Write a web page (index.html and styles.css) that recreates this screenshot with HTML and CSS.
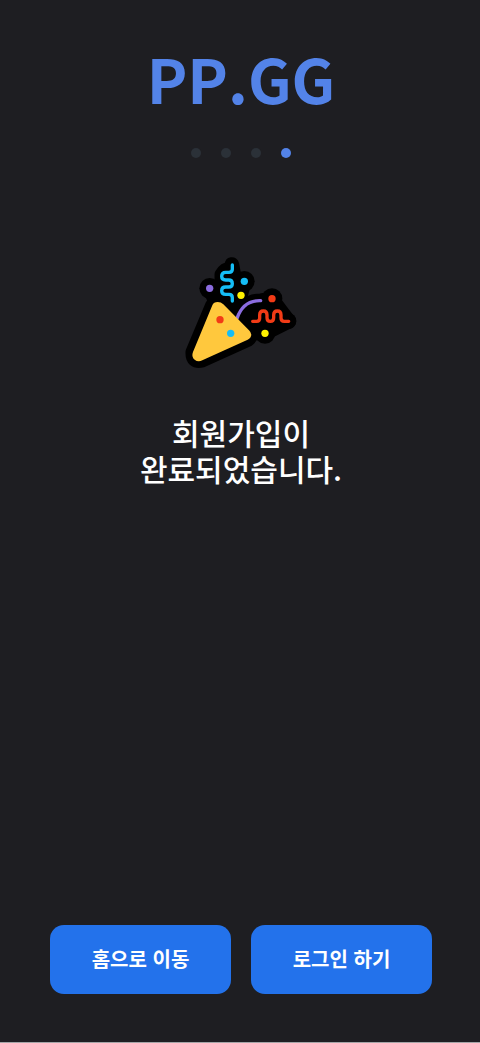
FILE: index.html
```html
<!DOCTYPE html>
<html lang="ko">
<head>
<meta charset="utf-8">
<meta name="viewport" content="width=device-width, initial-scale=1">
<title>PP.GG</title>
<link rel="stylesheet" href="styles.css">
</head>
<body>
<div class="page">
  <header class="header">
    <div class="logo">PP.GG</div>
    <ol class="steps" aria-label="4/4">
      <li class="step"></li>
      <li class="step"></li>
      <li class="step"></li>
      <li class="step step-active" aria-current="step"></li>
    </ol>
  </header>
  <main class="content">
    <svg class="party" viewBox="18 15 360 345" aria-hidden="true">
      <g fill="#000" stroke="#000" stroke-width="43" stroke-linecap="round" stroke-linejoin="round">
        <path d="M112 166Q127 145 145 164L222 241Q236 257 218 269L82 331Q51 339 53 306Z"/>
        <path d="M171 43V58Q150 55 140 74V122Q140 133 154 133L172 153L197 136L208 94L180 90Z"/>
        <path d="M104 115L140 122L125 165Z"/>
        <path d="M185 206Q207 151 258 152L291 146L316 180L342 214L270 250L218 248Z"/>
      </g>
      <g fill="#000">
        <circle cx="104" cy="115" r="31"/>
        <circle cx="208" cy="94" r="31"/>
        <circle cx="291" cy="146" r="31"/>
        <circle cx="340" cy="213" r="24"/>
        <circle cx="270" cy="250" r="31"/>
      </g>
      <g fill="none" stroke-width="10" stroke-linecap="round" stroke-linejoin="round">
        <path stroke="#8b6cdf" d="M186 205Q205 150 257 152"/>
        <path stroke="#15bdf6" d="M172 45V58Q172 67 162 67H152Q140 67 140 79Q140 90 152 90H161Q172 90 172 101Q172 111 161 111H152Q140 111 140 122Q140 133 152 133H162Q172 133 172 143V153"/>
        <path stroke="#f23b16" d="M233 214H245Q254 214 254 205V195Q254 183 265 183Q276 183 276 195V203Q276 214 286 214Q296 214 296 203V195Q296 183 307 183Q318 183 318 195V204Q318 214 328 214H341"/>
      </g>
      <path fill="#ffc83d" d="M112 166Q116 156 128 156Q138 156 145 163L222 241Q229 248 229 254Q228 264 218 269L82 331Q69 337 59 329Q48 321 54 306Z"/>
      <g fill="#8b6cdf"><circle cx="104" cy="115" r="11"/></g>
      <g fill="#15bdf6"><circle cx="208" cy="94" r="11"/><circle cx="167" cy="250" r="11"/></g>
      <g fill="#fff100"><circle cx="198" cy="136" r="11"/><circle cx="270" cy="250" r="11"/></g>
      <g fill="#f23b16"><circle cx="135" cy="209" r="11"/><circle cx="291" cy="146" r="11"/></g>
    </svg>
    <h1 class="message">회원가입이<br>완료되었습니다.</h1>
  </main>
  <footer class="actions">
    <button class="button" type="button">홈으로 이동</button>
    <button class="button" type="button">로그인 하기</button>
  </footer>
</div>
</body>
</html>
```
FILE: styles.css
```css
* {
  box-sizing: border-box;
}

body {
  margin: 0;
  background: #1e1e22;
  color: #fff;
  font-family: "Noto Sans CJK KR", "Noto Sans", sans-serif;
}

.page {
  display: flex;
  flex-direction: column;
  min-height: 100vh;
  padding: 42px 48px 48px 50px;
  border-bottom: 1px solid #a5a5a8;
}

.header,
.content {
  display: flex;
  flex-direction: column;
  align-items: center;
}

.logo {
  color: #5383e8;
  font-size: 61px;
  font-weight: 700;
  line-height: 72px;
}

.steps {
  display: flex;
  gap: 20px;
  margin: 34px 0 0;
  padding: 0;
  list-style: none;
}

.step {
  width: 10px;
  height: 10px;
  border-radius: 50%;
  background: #2b3138;
}

.step-active {
  background: #5383e8;
}

.content {
  flex: 1;
  padding-top: 97px;
}

.party {
  width: 120px;
  height: 115px;
}

.message {
  margin: 44px 0 0;
  font-size: 30px;
  font-weight: 500;
  line-height: 36px;
  text-align: center;
}

.actions {
  display: flex;
  gap: 20px;
}

.button {
  flex: 1;
  height: 69px;
  padding: 0 0 2px;
  border: 0;
  border-radius: 14px;
  background: #2372eb;
  color: #fff;
  font: inherit;
  font-size: 20px;
  font-weight: 700;
}
```
